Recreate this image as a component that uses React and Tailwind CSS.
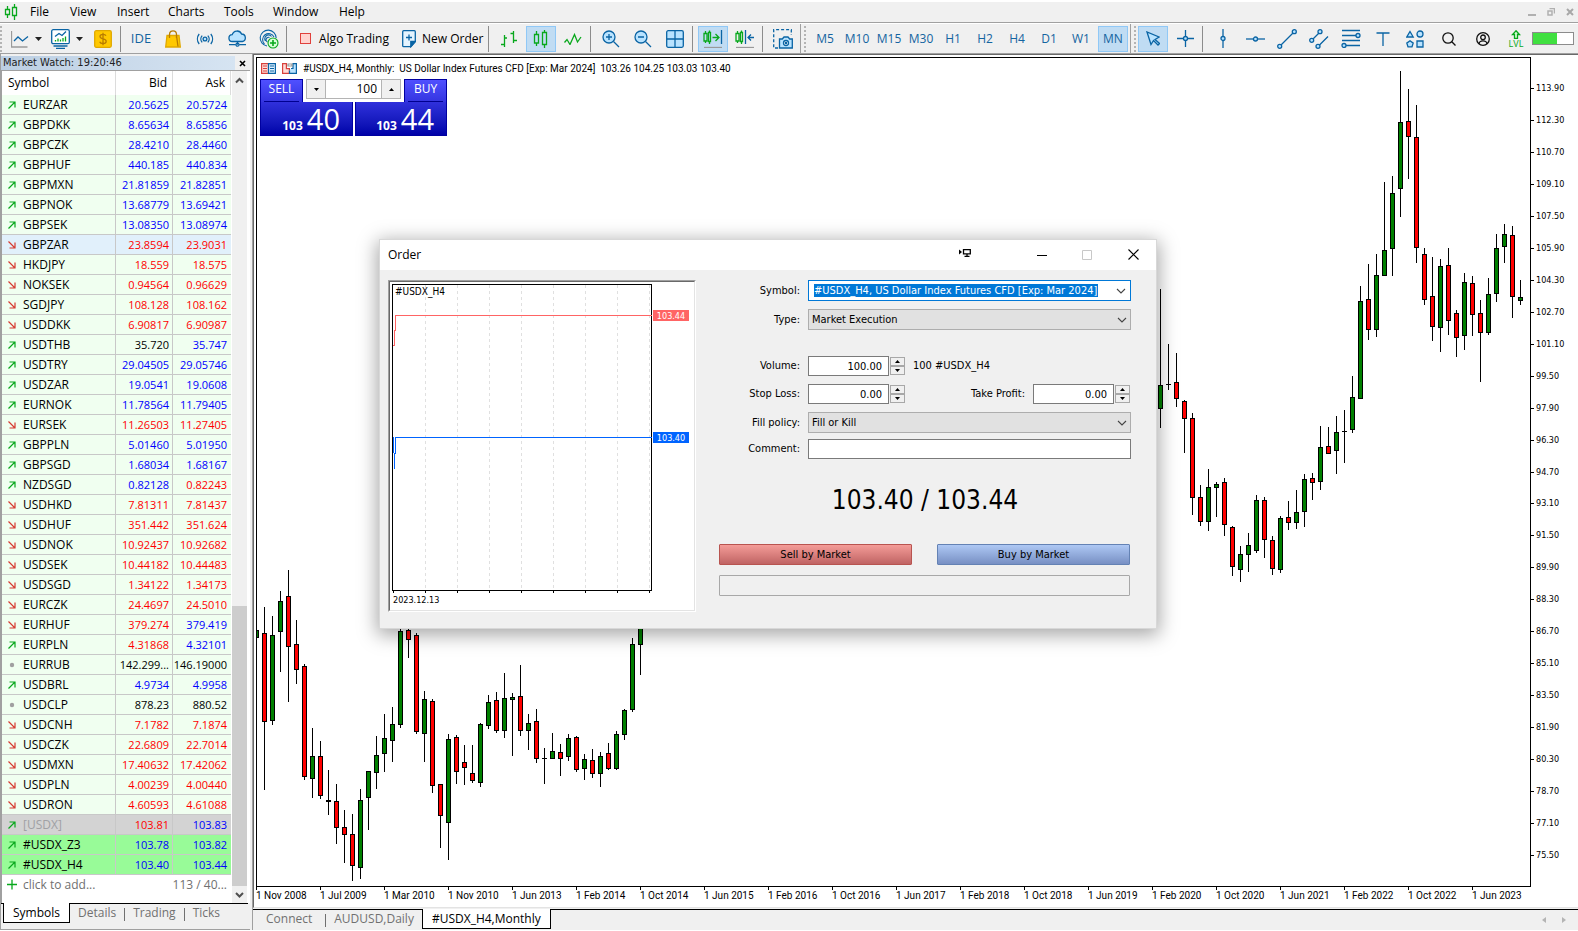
import React from "react";

const BLUE = "#0a64a4";
const SKY = "#b9e3ff";
const GREEN = "#08a81c";

const INK = { b: "text-[#0000ff]", r: "text-[#ff0000]", k: "text-black" };

const QUOTES = [
  ["u", "EURZAR", "20.5625", "20.5724", "bb"],
  ["u", "GBPDKK", "8.65634", "8.65856", "bb"],
  ["u", "GBPCZK", "28.4210", "28.4460", "bb"],
  ["u", "GBPHUF", "440.185", "440.834", "bb"],
  ["u", "GBPMXN", "21.81859", "21.82851", "bb"],
  ["u", "GBPNOK", "13.68779", "13.69421", "bb"],
  ["u", "GBPSEK", "13.08350", "13.08974", "bb"],
  ["d", "GBPZAR", "23.8594", "23.9031", "rr", "bg-[#e1f0fb]"],
  ["d", "HKDJPY", "18.559", "18.575", "rr"],
  ["d", "NOKSEK", "0.94564", "0.96629", "rr"],
  ["d", "SGDJPY", "108.128", "108.162", "rr"],
  ["d", "USDDKK", "6.90817", "6.90987", "rr"],
  ["u", "USDTHB", "35.720", "35.747", "kb"],
  ["u", "USDTRY", "29.04505", "29.05746", "bb"],
  ["u", "USDZAR", "19.0541", "19.0608", "bb"],
  ["u", "EURNOK", "11.78564", "11.79405", "bb"],
  ["d", "EURSEK", "11.26503", "11.27405", "rr"],
  ["u", "GBPPLN", "5.01460", "5.01950", "bb"],
  ["u", "GBPSGD", "1.68034", "1.68167", "bb"],
  ["u", "NZDSGD", "0.82128", "0.82243", "br"],
  ["d", "USDHKD", "7.81311", "7.81437", "rr"],
  ["d", "USDHUF", "351.442", "351.624", "rr"],
  ["d", "USDNOK", "10.92437", "10.92682", "rr"],
  ["d", "USDSEK", "10.44182", "10.44483", "rr"],
  ["d", "USDSGD", "1.34122", "1.34173", "rr"],
  ["d", "EURCZK", "24.4697", "24.5010", "rr"],
  ["d", "EURHUF", "379.274", "379.419", "rb"],
  ["u", "EURPLN", "4.31868", "4.32101", "rb"],
  ["n", "EURRUB", "142.299...", "146.19000", "kk"],
  ["u", "USDBRL", "4.9734", "4.9958", "bb"],
  ["n", "USDCLP", "878.23", "880.52", "kk"],
  ["d", "USDCNH", "7.1782", "7.1874", "rr"],
  ["d", "USDCZK", "22.6809", "22.7014", "rr"],
  ["d", "USDMXN", "17.40632", "17.42062", "rr"],
  ["d", "USDPLN", "4.00239", "4.00440", "rr"],
  ["d", "USDRON", "4.60593", "4.61088", "rr"],
  ["u", "[USDX]", "103.81", "103.83", "rb", "bg-[#d3d3d3]", "text-[#a0a0a4]"],
  ["u", "#USDX_Z3", "103.78", "103.82", "bb", "bg-[#98fb98]"],
  ["u", "#USDX_H4", "103.40", "103.44", "bb", "bg-[#98fb98]"],
];

// Each run: first slot, vertical origin, then [direction, high, body top, body bottom, low] at three units per pixel.
const RUNS = [
  [0, 560, [
    ["g", 210, 210, 234, 234], ["r", 141, 219, 486, 690], ["g", 168, 225, 483, 494], ["g", 93, 123, 216, 336],
    ["r", 30, 108, 261, 426], ["r", 180, 252, 330, 372], ["r", 312, 318, 651, 660], ["g", 504, 588, 657, 714],
    ["r", 543, 588, 708, 717], ["r", 630, 720, 726, 765], ["r", 672, 723, 804, 852], ["r", 750, 801, 825, 909],
    ["r", 762, 822, 918, 963], ["g", 687, 720, 924, 957], ["g", 633, 633, 714, 810], ["g", 528, 585, 639, 687],
    ["g", 462, 534, 582, 636], ["g", 441, 492, 543, 606], ["g", 204, 213, 495, 504], ["r", 204, 210, 240, 294],
    ["r", 219, 225, 516, 522], ["g", 393, 417, 522, 606], ["r", 417, 423, 678, 699], ["r", 672, 672, 768, 864],
    ["g", 522, 537, 789, 900], ["r", 525, 531, 636, 672], ["r", 555, 606, 624, 675], ["r", 555, 639, 663, 669],
    ["g", 489, 492, 669, 681], ["g", 405, 426, 498, 507], ["r", 396, 420, 513, 519], ["g", 339, 414, 513, 534],
    ["g", 399, 411, 420, 588], ["r", 315, 408, 513, 528], ["g", 462, 489, 513, 570], ["r", 447, 483, 597, 609],
    ["g", 564, 594, 597, 672], ["g", 519, 573, 597, 597], ["r", 552, 576, 597, 648], ["g", 522, 534, 591, 603],
    ["r", 528, 531, 630, 636], ["g", 582, 597, 627, 660], ["r", 567, 600, 642, 654], ["g", 576, 588, 642, 681],
    ["r", 549, 579, 627, 630], ["g", 513, 522, 627, 630], ["g", 447, 450, 525, 540], ["g", 234, 252, 450, 456],
    ["g", 100, 120, 255, 345],
  ]],
  [113, 280, [
    ["g", 27, 315, 387, 444], ["g", 192, 312, 315, 330], ["r", 219, 306, 357, 381], ["r", 360, 363, 417, 519],
    ["r", 399, 414, 654, 705], ["r", 615, 651, 726, 738], ["g", 567, 621, 726, 753], ["g", 606, 612, 624, 711],
    ["r", 594, 606, 735, 768], ["r", 738, 741, 861, 888], ["g", 798, 822, 870, 906], ["g", 759, 795, 825, 876],
    ["g", 645, 660, 813, 819], ["r", 651, 660, 780, 834], ["r", 768, 780, 867, 885], ["g", 708, 714, 870, 879],
    ["r", 663, 711, 729, 750], ["g", 630, 696, 729, 747], ["g", 582, 597, 696, 741], ["r", 579, 594, 609, 660],
    ["g", 438, 501, 606, 630], ["r", 441, 498, 522, 522], ["g", 408, 456, 513, 582], ["g", 390, 453, 456, 549],
    ["g", 288, 351, 450, 459],
  ]],
  [138, 50, [
    ["g", 708, 753, 1047, 1047], ["r", 642, 747, 840, 870], ["g", 612, 675, 840, 861], ["g", 396, 600, 678, 678],
    ["g", 378, 429, 597, 678], ["g", 63, 216, 417, 501], ["r", 117, 213, 261, 387], ["r", 165, 261, 594, 639],
    ["r", 594, 612, 750, 765], ["r", 621, 738, 831, 873], ["g", 627, 648, 834, 906], ["r", 594, 645, 813, 855],
    ["r", 780, 789, 864, 921], ["g", 669, 696, 858, 900], ["r", 678, 699, 795, 858], ["r", 750, 789, 849, 996],
    ["g", 684, 732, 849, 855], ["g", 552, 594, 732, 756], ["g", 522, 552, 591, 639], ["r", 528, 555, 741, 804],
    ["g", 690, 741, 753, 765],
  ]],
];

const CANDLES = RUNS.flatMap(([start, origin, list]) =>
  list.map(([dir, high, top, bottom, low], i) => ({
    dir,
    x: (start + i) * 8 - 1,
    high: Math.round(high / 3) + origin - 58,
    top: Math.round(top / 3) + origin - 58,
    bottom: Math.round(bottom / 3) + origin - 58,
    low: Math.round(low / 3) + origin - 58,
  }))
);

const DATES = [
  "1 Nov 2008", "1 Jul 2009", "1 Mar 2010", "1 Nov 2010", "1 Jun 2013", "1 Feb 2014", "1 Oct 2014",
  "1 Jun 2015", "1 Feb 2016", "1 Oct 2016", "1 Jun 2017", "1 Feb 2018", "1 Oct 2018", "1 Jun 2019",
  "1 Feb 2020", "1 Oct 2020", "1 Jun 2021", "1 Feb 2022", "1 Oct 2022", "1 Jun 2023",
];

const PRICES = Array.from({ length: 25 }, (_, i) => (113.9 - i * 1.6).toFixed(2));

function Icon({ w = 20, h = 20, children, ...rest }) {
  return (
    <svg width={w} height={h} viewBox={`0 0 ${w} ${h}`} fill="none" stroke={BLUE} strokeWidth="1.3" aria-hidden="true" className="shrink-0" {...rest}>
      {children}
    </svg>
  );
}

function Tool({ label, active, children }) {
  return (
    <button
      type="button"
      aria-label={label}
      className={`flex h-[26px] w-[30px] shrink-0 items-center justify-center border ${active ? "border-[#90c8f6] bg-[#c0dcf3]" : "border-transparent"}`}
    >
      {children}
    </button>
  );
}

const Sep = () => <span className="h-[26px] w-1 shrink-0 border-l border-[#8c8c8c]" />;
const Grip = () => <span className="h-[26px] w-[2px] shrink-0 border-l-2 border-dotted border-[#b4b4b4]" />;
const Caret = () => (
  <svg width="7" height="4" viewBox="0 0 7 4" aria-hidden="true"><path d="M0 0h7L3.500 4z" fill="#222" /></svg>
);

function MenuBar() {
  return (
    <header className="flex h-[23px] items-center border-t-2 border-b border-t-white border-b-[#a0a0a0] bg-[#f0f0f0] text-xs">
      <Icon w={14} h={16} stroke={GREEN} className="mr-[3px] ml-1 shrink-0">
        <path d="M3.500 2v3M3.500 11v3M1.500 5.500h4v5h-4zM10.500 0v3M10.500 12v4M8.500 3.500h4v8h-4z" />
      </Icon>
      <nav className="flex">
        <a href="#file" className="w-10 pl-[9px]">File</a>
        <a href="#view" className="w-[47px] pl-[9px]">View</a>
        <a href="#insert" className="w-[51px] pl-[9px]">Insert</a>
        <a href="#charts" className="w-14 pl-[9px]">Charts</a>
        <a href="#tools" className="w-[49px] pl-[9px]">Tools</a>
        <a href="#window" className="w-[66px] pl-[9px]">Window</a>
        <a href="#help" className="pl-[9px]">Help</a>
      </nav>
      <div className="mr-1 ml-auto flex gap-[11px]">
        <button type="button" aria-label="Minimize"><Icon w={8} h={8} stroke="#b0b0b0" strokeWidth="2"><path d="M0 7h8" /></Icon></button>
        <button type="button" aria-label="Restore"><Icon w={8} h={8} stroke="#b0b0b0"><path d="M2.500 0.600h5v5M1 3h4v4H1z" strokeWidth="1.500" /></Icon></button>
        <button type="button" aria-label="Close"><Icon w={8} h={8} stroke="#a8a8a8" strokeWidth="2"><path d="M1 1l6 6M7 1L1 7" /></Icon></button>
      </div>
    </header>
  );
}

function Toolbar() {
  return (
    <div className="flex h-[31px] items-center gap-[2px] overflow-hidden border-t border-b border-t-white border-b-[#a0a0a0] bg-[#f0f0f0] text-xs text-[#1464a0]">
      <span className="w-1 shrink-0"><span className="block h-[26px] border-l-2 border-dotted border-[#b4b4b4]" /></span>
      <button type="button" aria-label="Line chart" className="flex w-10 shrink-0 items-center gap-[6px] pl-[5px]">
        <Icon w={18} h={18}><path d="M.5 1v16h16" stroke="#9a9a9a" /><path d="M3 11l4-4 4.500 4L17 6.500" /></Icon>
        <Caret />
      </button>
      <button type="button" aria-label="Indicators" className="flex w-[38px] shrink-0 items-center gap-[6px] pl-[3px]">
        <Icon w={19} h={20}>
          <rect x=".7" y=".7" width="17.600" height="14" rx="1.500" fill="#fff" />
          <path d="M4 7.500l4-3 3 2 4-4" />
          <path d="M4.500 12.500v-1.500M7 12.500v-3M9.500 12.500v-2M12 12.500v-3.500M14.500 12.500v-5" stroke={GREEN} />
          <path d="M2.500 17h14M5 19.300h9" />
        </Icon>
        <Caret />
      </button>
      <Tool label="Trade">
        <Icon w={18} h={18} stroke="#e0a800"><rect x=".7" y=".7" width="16.600" height="16.600" rx="1.500" fill="#ffc800" />
          <path d="M12 5.800C11.500 4.800 10.500 4.400 9 4.400c-1.700 0-3 .8-3 2.200 0 3.200 6.200 1.400 6.200 4.600 0 1.500-1.400 2.400-3.200 2.400-1.700 0-2.900-.6-3.300-1.800M9 2.700v12.600" stroke="#b87c00" /></Icon>
      </Tool>
      <Sep />
      <Tool label="IDE"><span className="text-[13px]">IDE</span></Tool>
      <Tool label="Market">
        <Icon w={16} h={18} stroke="#e0a800"><path d="M2 5.500h12L15.300 17H.7z" fill="#ffc800" /><path d="M4.500 8V4.500C4.500 1 7 .8 8 .8s3.500.2 3.500 3.700V8M11.500 5.500L13 16.500" stroke="#b87c00" /></Icon>
      </Tool>
      <Tool label="Signals">
        <Icon w={18} h={14}><circle cx="9" cy="7" r="1.900" fill={SKY} /><path d="M6.200 3.600a5 5 0 000 6.800M11.800 3.600a5 5 0 010 6.800M3.200 2a8 8 0 000 10M14.800 2a8 8 0 010 10" /></Icon>
      </Tool>
      <Tool label="VPS">
        <Icon w={19} h={17}><path d="M4.500 11.500a3.400 3.400 0 01-.3-6.800A5 5 0 0113.600 4a3.800 3.800 0 01.8 7.500z" fill={SKY} /><path d="M9.500 11.500v3.200M1 14.700h6.800M11.200 14.700H18" /><circle cx="9.500" cy="14.700" r="1.500" /></Icon>
      </Tool>
      <Tool label="Community">
        <Icon w={20} h={20} strokeWidth="1.100"><path d="M8 17A8 8 0 1117.200 9M5.500 15A6 6 0 1115 8M6.500 12A3.700 3.700 0 1112.500 7.500M8.500 13A1.600 1.600 0 1110.500 8.500" /><circle cx="14" cy="14" r="5" fill="#d9ffd9" stroke={GREEN} /><path d="M14 11v6M11 14h6" stroke={GREEN} strokeWidth="1.600" /></Icon>
      </Tool>
      <Sep />
      <button type="button" className="flex w-[100px] shrink-0 items-center gap-2 pl-2 text-black">
        <span className="size-[11px] border border-[#e0403c] bg-[#ffd4d0]" />
        Algo Trading
      </button>
      <button type="button" className="flex w-[92px] shrink-0 items-center gap-[6px] pl-2 whitespace-nowrap text-black">
        <Icon w={14} h={18}><path d="M1.700.7h10.600q1 0 1 1v9.800l-4.500 5.200H1.700q-1 0-1-1v-14q0-1 1-1z" fill="#e4f4ff" /><path d="M13.300 11.500H8.800v5.200z" fill={BLUE} /><path d="M7 4.500v6M4 7.500h6" /></Icon>
        New Order
      </button>
      <Sep />
      <Tool label="Bar chart"><Icon w={18} h={18} stroke={GREEN}><path d="M4.500 5v12M1 14.500h3.500M4.500 8H7M13.500 1v12M10.500 3.500h3M13.500 10.500H17" /></Icon></Tool>
      <Tool label="Candles" active><Icon w={16} h={18} stroke={GREEN}><path d="M3.500 1v3M3.500 13v3M1.500 4.500h4v8.500h-4zM11.500 0v2.500M11.500 15v3M9.500 2.500h4v12h-4z" /></Icon></Tool>
      <Tool label="Line"><Icon w={18} h={12} stroke={GREEN}><path d="M.5 9.500l2.500-3 3 5 4.500-10 3 7.500 3.500-5" /></Icon></Tool>
      <Sep />
      <Tool label="Zoom in"><Icon w={18} h={18}><circle cx="7" cy="7" r="6" fill={SKY} /><path d="M11.500 11.500l5.500 5.500M7 4v6M4 7h6" /></Icon></Tool>
      <Tool label="Zoom out"><Icon w={18} h={18}><circle cx="7" cy="7" r="6" fill={SKY} /><path d="M11.500 11.500l5.500 5.500M4 7h6" /></Icon></Tool>
      <Tool label="Tile"><Icon w={18} h={18}><rect x=".7" y=".7" width="16.600" height="16.600" rx="1.500" fill={SKY} /><path d="M9 1v16M1 9h16" /></Icon></Tool>
      <Sep />
      <Tool label="Auto scroll" active><Icon w={20} h={18}><path d="M2.500 1v2M2.500 11v2M1 3.500h3V11H1zM6.500.5v2M6.500 12v2M5.500 2.500h2v9h-2zM9.500 7.500h6M12.500 4l3.500 3.500-3.500 3.500" stroke={GREEN} /><path d="M18.500 0v14" /><path d="M1 17.500h18" stroke="#999" /></Icon></Tool>
      <Tool label="Chart shift"><Icon w={20} h={18}><path d="M2.500 1v2M2.500 11v2M1 3.500h3V11H1zM6.500.5v2M6.500 12v2M5.500 2.500h2v9h-2z" stroke={GREEN} /><path d="M10.500 0v14M13 7.500h6M16 4.500l-3 3 3 3" /><path d="M1 17.500h18" stroke="#999" /></Icon></Tool>
      <Sep />
      <Tool label="Screenshot"><Icon w={20} h={20}><path d="M5 19H.7V.7h17.600V6" strokeDasharray="3 2" /><path d="M6.500 19V10h2.800l1.700-2h4l1.700 2h2.600v9z" fill={SKY} /><circle cx="13" cy="14" r="2.500" fill="#fff" /><circle cx="13" cy="14" r=".6" /></Icon></Tool>
      <span className="flex h-[30px] w-2 shrink-0 items-center border-l border-[#a0a0a0] pl-[3px]"><Grip /></span>
      {["M5", "M10", "M15", "M30", "H1", "H2", "H4", "D1", "W1", "MN"].map((t) => (
        <Tool key={t} label={t} active={t === "MN"}>{t}</Tool>
      ))}
      <span className="flex h-[30px] w-[6px] shrink-0 items-center border-l border-[#a0a0a0] pl-[3px]"><Grip /></span>
      <Tool label="Cursor" active><Icon w={14} h={15}><path d="M1 1l4 12.500 2.500-4 4.500 4.500 1.500-1.500L9 8.500l4-2.500z" fill={SKY} /></Icon></Tool>
      <Tool label="Crosshair"><Icon w={17} h={17}><path d="M8.500 0v6.500M8.500 10.500V17M0 8.500h6.500M10.500 8.500H17" /><circle cx="8.500" cy="8.500" r="2" fill={SKY} /></Icon></Tool>
      <Sep />
      <Tool label="Vertical line"><Icon w={6} h={19}><path d="M3 0v19" /><circle cx="3" cy="9.500" r="2" fill={SKY} /></Icon></Tool>
      <Tool label="Horizontal line"><Icon w={19} h={6}><path d="M0 3h19" /><circle cx="9.500" cy="3" r="2" fill={SKY} /></Icon></Tool>
      <Tool label="Trend line"><Icon w={20} h={20}><path d="M3 17L17 3" /><circle cx="2.700" cy="17.300" r="2" fill={SKY} /><circle cx="17.300" cy="2.700" r="2" fill={SKY} /></Icon></Tool>
      <Tool label="Channel"><Icon w={20} h={20}><path d="M2.500 11.500L11 3M9 17.500L19 7.500" /><circle cx="2.700" cy="11.300" r="2" fill={SKY} /><circle cx="11" cy="2.700" r="2" fill={SKY} /><circle cx="9" cy="17.300" r="2" fill={SKY} /></Icon></Tool>
      <Tool label="Fibonacci"><Icon w={20} h={19}><path d="M1 1.500h18M1 6.500h14M1 11.500h18M4 16.500h15" /><circle cx="17" cy="6.500" r="2" fill={SKY} /><circle cx="3" cy="16.500" r="2" fill={SKY} /></Icon></Tool>
      <Tool label="Text"><Icon w={14} h={14}><path d="M.5 1h13M7 1v13" /></Icon></Tool>
      <Tool label="Shapes"><Icon w={18} h={18}><path d="M4 1.500L7.200 7H.8zM4 10.800l3.200 2.300-1.200 3.700H2L.8 13.100zM11 11h6v6h-6z" fill={SKY} /><circle cx="14" cy="4" r="3" fill={SKY} /></Icon></Tool>
      <div className="mr-1 ml-auto flex shrink-0 items-center">
        <button type="button" aria-label="Search" className="mr-5"><Icon w={14} h={14} stroke="#111"><circle cx="6" cy="6" r="5.200" /><path d="M9.800 9.800l3.700 3.700" /></Icon></button>
        <button type="button" aria-label="Account" className="mr-[18px]"><Icon w={14} h={14} stroke="#111"><circle cx="7" cy="7" r="6.300" /><circle cx="7" cy="5.300" r="2.300" /><path d="M3 11.800c.5-4 7.500-4 8 0" /></Icon></button>
        <button type="button" aria-label="Level" className="mr-2 flex w-4 flex-col items-center text-[9px] leading-[9px] text-[#08a81c]">
          <Icon w={10} h={9} stroke={GREEN}><path d="M5 .8l3.500 3.700H6.500v4h-3v-4H1.500z" fill="#d9ffd9" /></Icon>
          LVL
        </button>
        <span className="flex h-[13px] w-[42px] border border-[#8c8c8c] bg-white"><span className="w-6 bg-[#40e040]" /></span>
      </div>
    </div>
  );
}

function Trend({ dir }) {
  if (dir === "n") return <svg width="8" height="8" viewBox="0 0 8 8" aria-hidden="true"><circle cx="4" cy="4" r="2.200" fill="#a0a0a0" /></svg>;
  return dir === "u" ? (
    <svg width="8" height="8" viewBox="0 0 8 8" fill="none" stroke={GREEN} strokeWidth="1.200" aria-hidden="true"><path d="M1.500 1H7v5.500M7 1L.5 7.500" /></svg>
  ) : (
    <svg width="8" height="8" viewBox="0 0 8 8" fill="none" stroke="#d63a30" strokeWidth="1.200" aria-hidden="true"><path d="M1.500 7H7V1.500M7 7L.5.5" /></svg>
  );
}

function MarketWatch() {
  const num = "h-5 border-b border-[#c8c8c8] p-0 text-right text-[11px] leading-[19px]";
  return (
    <section className="flex w-[250px] shrink-0 flex-col border-l border-[#a0a0a0]">
      <h2 className="mt-[2px] flex h-[14px] items-center text-xs leading-[14px]">
        <span className="h-[14px] w-[234px] bg-gradient-to-r from-[#bccfe3] to-[#d6e4f2] pl-[2px] font-['DejaVu_Sans_Condensed','Noto_Sans',sans-serif] text-[11px] text-[#222]">Market Watch: 19:20:46</span>
        <button type="button" aria-label="Close panel" className="ml-1"><Icon w={7} h={7} stroke="#000" strokeWidth="1.600"><path d="M1 1l5 5M6 1L1 6" /></Icon></button>
      </h2>
      <div className="flex border-t border-l border-[#a0a0a0] bg-white">
        <div className="w-[229px]">
          <table className="w-full table-fixed border-separate border-spacing-0 text-xs">
            <colgroup><col className="w-[114px]" /><col className="w-[57px]" /><col className="w-[58px]" /></colgroup>
            <thead>
              <tr className="h-6">
                <th className="border-r border-[#dcdcdc] p-0 pl-[6px] text-left font-normal">Symbol</th>
                <th className="border-r border-[#dcdcdc] p-0 pr-[5px] text-right font-normal">Bid</th>
                <th className="border-r border-[#dcdcdc] p-0 pr-[5px] text-right font-normal">Ask</th>
              </tr>
            </thead>
            <tbody>
              {QUOTES.map(([dir, name, bid, ask, inks, bg, ink]) => (
                <tr key={name} className={bg || "bg-[#f0fff0]"}>
                  <td className="h-5 border-r border-b border-[#c8c8c8] p-0">
                    <span className={`flex items-center gap-[7px] pl-[6px] leading-[19px] ${ink || "text-black"}`}><Trend dir={dir} />{name}</span>
                  </td>
                  <td className={`border-r pr-[3px] ${num} ${INK[inks[0]]}`}>{bid}</td>
                  <td className={`pr-1 ${num} ${INK[inks[1]]}`}>{ask}</td>
                </tr>
              ))}
            </tbody>
          </table>
          <div className="flex h-7 justify-between pr-1 pl-[5px] text-xs leading-5 text-[#707070]">
            <span className="flex gap-[6px]">
              <Icon w={10} h={20} stroke={GREEN}><path d="M0 9.500h10M5 4.500v10" /></Icon>
              click to add...
            </span>
            <span>113 / 40...</span>
          </div>
        </div>
        <div className="ml-px flex w-[15px] flex-col items-center bg-[#f0f0f0]">
          <Icon w={9} h={18} stroke="#505050" strokeWidth="2"><path d="M1 11.500l3.500-3.500L8 11.500" /></Icon>
          <span className="mt-auto h-[280px] w-full bg-[#cdcdcd]" />
          <Icon w={9} h={17} stroke="#505050" strokeWidth="2"><path d="M1 7l3.500 3.500L8 7" /></Icon>
        </div>
      </div>
      <div className="flex flex-1 border-b border-[#a0a0a0] pb-1">
        <div className="mr-[2px] flex flex-1 items-start border-t border-black text-xs leading-[18px] text-[#707070]">
          <button type="button" className="-mt-px ml-[2px] h-5 border border-t-0 border-black bg-white px-[9px] text-black">Symbols</button>
          <button type="button" className="px-2">Details</button>
          <span className="mt-1 h-[13px] border-l border-[#707070]" />
          <button type="button" className="px-2">Trading</button>
          <span className="mt-1 h-[13px] border-l border-[#707070]" />
          <button type="button" className="px-2">Ticks</button>
        </div>
      </div>
    </section>
  );
}

function Plot() {
  return (
    <svg width="1273" height="828" viewBox="0 0 1273 828" shapeRendering="crispEdges" className="absolute top-0 left-0" role="img" aria-label="Monthly candles">
      {CANDLES.map(({ dir, x, high, top, bottom, low }) => (
        <g key={x}>
          <rect x={x} y={high} width="1" height={low - high} />
          <rect x={x - 2} y={top} width="5" height={bottom - top} />
          {bottom - top > 2 && <rect x={x - 1} y={top + 1} width="3" height={bottom - top - 2} fill={dir === "g" ? "#008000" : "#ff0000"} />}
        </g>
      ))}
    </svg>
  );
}

function OneClick() {
  const top = "h-[23px] w-[43px] border border-b-0 border-[#0000a0] bg-gradient-to-b from-[#5050ff] to-[#3434e0] px-[3px] text-xs text-white";
  const low = "flex h-[34px] items-end border border-[#0000a0] border-t-0 bg-gradient-to-b from-[#3030dc] to-[#0000a8] text-white";
  return (
    <div className="absolute top-[21px] left-[3px] w-[187px]">
      <div className="flex justify-between">
        <button type="button" className={top}><span className="block border-b border-[#000090] pb-[3px] leading-[18px]">SELL</span></button>
        <div className="mx-[3px] flex h-5 flex-1 border border-[#b4b4b4] bg-white">
          <button type="button" aria-label="Less volume" className="flex w-[19px] items-center justify-center border-r border-[#b4b4b4] bg-[#f0f0f0]"><svg width="5" height="3" viewBox="0 0 5 3" aria-hidden="true"><path d="M0 0h5L2.500 3z" /></svg></button>
          <input aria-label="Lots" defaultValue="100" className="w-0 min-w-0 flex-1 pr-1 text-right text-xs" />
          <button type="button" aria-label="More volume" className="flex w-[19px] items-center justify-center border-l border-[#b4b4b4] bg-[#f0f0f0]"><svg width="5" height="3" viewBox="0 0 5 3" aria-hidden="true"><path d="M0 3h5L2.500 0z" /></svg></button>
        </div>
        <button type="button" className={top}><span className="block border-b border-[#000090] pb-[3px] leading-[18px]">BUY</span></button>
      </div>
      <div className="flex justify-between">
        <button type="button" aria-label="Sell 103.40" className={`${low} w-[93px] justify-end pr-3`}>
          <b className="mr-1 pb-px text-xs">103</b><span className="pb-[2px] text-[29px] leading-[29px]">40</span>
        </button>
        <button type="button" aria-label="Buy 103.44" className={`${low} w-[92px] justify-end pr-3`}>
          <b className="mr-1 pb-px text-xs">103</b><span className="pb-[2px] text-[29px] leading-[29px]">44</span>
        </button>
      </div>
    </div>
  );
}

function ChartPane() {
  return (
    <section className="ml-[2px] flex min-w-0 flex-1 flex-col border-l border-[#a0a0a0]">
      <div className="flex flex-1 flex-col border-t border-b border-l border-t-[#696969] border-b-[#e3e3e3] border-l-[#696969] bg-white pt-[2px] pl-[2px]">
        <div className="flex flex-1">
          <div className="relative h-[830px] min-w-0 flex-1 overflow-hidden border border-black">
            <Plot />
            <div className="relative flex items-center pt-1 pl-1 font-[Roboto,'Noto_Sans',sans-serif] text-[10px] leading-[13px] whitespace-pre">
              <Icon w={15} h={11} strokeWidth="1.200" className="mr-[6px] shrink-0"><path d="M.6.6H7.500v9.800H.6zM2 3h4M2 5.500h4M2 8h4" stroke="#d8403c" fill="#ffdcd8" /><path d="M7.500.6h6.900v9.800H7.500zM9 3h4M9 5.500h4M9 8h4" fill="#dcf0ff" /></Icon>
              <Icon w={15} h={11} strokeWidth="1.200" className="mr-[6px] shrink-0"><path d="M.6.6h3.800v5h3v4.800H.6z" stroke="#d8403c" fill="#ffdcd8" /><path d="M9 5.500h2V.6h3.400v9.800H7.500V7.500" fill="#b9e3ff" /><path d="M6 1h4v2H6z" stroke="#999" /></Icon>
              <span>#USDX_H4, Monthly:  US Dollar Index Futures CFD [Exp: Mar 2024]  103.26 104.25 103.03 103.40</span>
            </div>
            <OneClick />
          </div>
          <ul className="w-[47px] shrink-0 pt-[24px] font-['DejaVu_Sans_Condensed','Noto_Sans',sans-serif] text-[9px] leading-[14px]">
            {PRICES.map((p, i) => (
              <li key={p} className={`flex items-center gap-[2px] ${i === 12 ? "h-[31px] pb-[17px]" : "h-8 pb-[18px]"}`}>
                <span className="w-[3px] border-t border-black" />{p}
              </li>
            ))}
          </ul>
        </div>
        <ul className="flex h-5 overflow-hidden font-[Roboto,'Noto_Sans',sans-serif] text-[10px] leading-[12px] whitespace-nowrap">
          {DATES.map((d) => (
            <li key={d} className="w-16 shrink-0"><span className="block h-[3px] w-px bg-black" />{d}</li>
          ))}
        </ul>
      </div>
      <div className="mt-px flex h-[21px] items-start border-t border-black text-xs leading-[18px] text-[#707070]">
        <button type="button" className="px-[13px]">Connect</button>
        <span className="mt-1 h-[13px] border-l border-[#707070]" />
        <button type="button" className="px-2">AUDUSD,Daily</button>
        <button type="button" className="-mt-px h-5 border border-t-0 border-black bg-white px-[9px] text-black">#USDX_H4,Monthly</button>
        <span className="mt-[7px] mr-3 ml-auto flex gap-4">
          <svg width="4" height="6" viewBox="0 0 4 6" aria-hidden="true"><path d="M4 0v6L0 3z" fill="#b4b4b4" /></svg>
          <svg width="4" height="6" viewBox="0 0 4 6" aria-hidden="true"><path d="M0 0v6l4-3z" fill="#b4b4b4" /></svg>
        </span>
      </div>
    </section>
  );
}

const Chevron = () => (
  <svg width="10" height="6" viewBox="0 0 10 6" fill="none" stroke="#444" strokeWidth="1.100" aria-hidden="true" className="pointer-events-none"><path d="M1 1l4 4 4-4" /></svg>
);

function Spin({ id, value }) {
  const btn = "flex h-[9px] w-[15px] items-center justify-center border border-[#a8a8a8] bg-[#f0f0f0]";
  return (
    <span className="flex items-center gap-px">
      <input id={id} defaultValue={value} className="h-5 w-[81px] border border-[#7a7a7a] bg-white pr-[6px] text-right" />
      <span className="flex flex-col">
        <button type="button" aria-label={`Increase ${id}`} className={btn}><svg width="5" height="3" viewBox="0 0 5 3" aria-hidden="true"><path d="M0 3h5L2.500 0z" /></svg></button>
        <button type="button" aria-label={`Decrease ${id}`} className={btn}><svg width="5" height="3" viewBox="0 0 5 3" aria-hidden="true"><path d="M0 0h5L2.500 3z" /></svg></button>
      </span>
    </span>
  );
}

function Drop({ id, value }) {
  return (
    <span className="relative flex flex-1 items-center">
      <select id={id} className="h-[21px] w-full appearance-none border border-[#adadad] bg-[#e1e1e1] pl-[3px]"><option>{value}</option></select>
      <span className="pointer-events-none absolute right-1"><Chevron /></span>
    </span>
  );
}

function TickChart() {
  return (
    <div className="h-[332px] w-[308px] shrink-0 border border-t-[#a0a0a0] border-r-white border-b-white border-l-[#a0a0a0]">
      <div className="h-full border border-t-[#696969] border-r-[#e3e3e3] border-b-[#e3e3e3] border-l-[#696969] bg-white">
        <svg width="304" height="328" viewBox="390 282 304 328" shapeRendering="crispEdges" role="img" aria-label="Tick chart" className="block">
          {[0, 1, 2, 3, 4, 5, 6, 7].map((i) => (
            <path key={i} d={`M${425.5 + i * 32} 285v305`} stroke="#e0e0e0" strokeDasharray="3 3" />
          ))}
          <rect x="392.500" y="284.500" width="259" height="306" fill="none" stroke="#000" />
          {[0, 1, 2, 3, 4, 5, 6, 7, 8].map((i) => <rect key={i} x={393 + i * 32} y="591" width="1" height="2" />)}
          <path d="M393 345.500h1.500V330.500h1V315.500H652" fill="none" stroke="#ff6464" />
          <path d="M393.500 453v-16M394.500 469V453.500h1V437.500H652" fill="none" stroke="#0064ff" />
          <rect x="653" y="310" width="36" height="11" fill="#ff6464" />
          <rect x="653" y="432" width="36" height="11" fill="#0064ff" />
          <g fontSize="10">
            <text x="395" y="295">#USDX_H4</text>
            <text x="393" y="603" fontSize="9">2023.12.13</text>
            <text x="671" y="319" fontSize="9" textAnchor="middle" fill="#fff">103.44</text>
            <text x="671" y="441" fontSize="9" textAnchor="middle" fill="#fff">103.40</text>
          </g>
        </svg>
      </div>
    </div>
  );
}

function OrderDialog() {
  const row = "flex items-center gap-2";
  const label = "w-[81px] text-right";
  return (
    <div role="dialog" aria-label="Order" className="absolute top-[239px] left-[379px] w-[778px] border border-[#d8d8d8] bg-[#f0f0f0] font-['DejaVu_Sans_Condensed','Noto_Sans',sans-serif] text-[11px] leading-4 text-black shadow-[0_4px_18px_2px_rgba(0,0,0,0.35)]">
      <div className="flex h-[30px] items-center bg-white pr-[17px] pb-px pl-2 font-['Open_Sans','Noto_Sans',sans-serif] text-xs">
        <span className="flex-1">Order</span>
        <button type="button" aria-label="Pin" className="mr-[66px] mb-1"><Icon w={12} h={8} stroke="#000"><path d="M4.500.6h6.800v4.300H4.500zM8 5v2.500M5.500 7.400h5" /><path d="M0 .5v5l3-2.500z" fill="#000" stroke="none" /></Icon></button>
        <button type="button" aria-label="Minimize dialog" className="mr-[35px]"><Icon w={10} h={10} stroke="#000" strokeWidth="1"><path d="M0 5.500h10" /></Icon></button>
        <button type="button" aria-label="Maximize dialog" className="mr-9"><Icon w={10} h={10} stroke="#c8c8c8" strokeWidth="1"><path d="M.5.5h9v9h-9z" /></Icon></button>
        <button type="button" aria-label="Close dialog"><Icon w={11} h={11} stroke="#000" strokeWidth="1.100"><path d="M.5.5l10 10M10.500.5l-10 10" /></Icon></button>
      </div>
      <div className="flex justify-between pt-[10px] pr-[25px] pb-4 pl-2">
        <TickChart />
        <form className="w-[412px]">
          <div className={row}>
            <label htmlFor="symbol" className={label}>Symbol:</label>
            <span className="flex h-[21px] flex-1 items-center justify-between border border-[#0078d7] bg-white pr-1 pl-[5px]">
              <select id="symbol" className="h-[13px] appearance-none bg-[#0078d7] leading-[13px] text-white"><option>#USDX_H4, US Dollar Index Futures CFD [Exp: Mar 2024]</option></select>
              <Chevron />
            </span>
          </div>
          <div className={`${row} mt-2`}>
            <label htmlFor="type" className={label}>Type:</label>
            <Drop id="type" value="Market Execution" />
          </div>
          <div className={`${row} mt-[26px]`}>
            <label htmlFor="volume" className={label}>Volume:</label>
            <Spin id="volume" value="100.00" />
            <span>100 #USDX_H4</span>
          </div>
          <div className={`${row} mt-2 pr-px`}>
            <label htmlFor="stop-loss" className={label}>Stop Loss:</label>
            <Spin id="stop-loss" value="0.00" />
            <label htmlFor="take-profit" className="ml-auto">Take Profit:</label>
            <Spin id="take-profit" value="0.00" />
          </div>
          <div className={`${row} mt-2`}>
            <label htmlFor="fill" className={label}>Fill policy:</label>
            <Drop id="fill" value="Fill or Kill" />
          </div>
          <div className={`${row} mt-[6px]`}>
            <label htmlFor="comment" className={label}>Comment:</label>
            <input id="comment" className="h-5 min-w-0 flex-1 border border-[#7a7a7a] bg-white px-1" />
          </div>
          <p className="mt-[25px] text-center text-[26px] leading-8">103.40 / 103.44</p>
          <div className="mt-7 flex justify-between pr-px">
            <button type="button" className="h-[21px] w-[193px] rounded-[1px] border border-[#b85450] bg-gradient-to-b from-[#f49c98] to-[#c06464]">Sell by Market</button>
            <button type="button" className="h-[21px] w-[193px] rounded-[1px] border border-[#6482b4] bg-gradient-to-b from-[#aec8f4] to-[#7890c4]">Buy by Market</button>
          </div>
          <div className="mt-[10px] mr-px h-[21px] rounded-[1px] border border-[#a8a8a8]" />
        </form>
      </div>
    </div>
  );
}

export default function App() {
  return (
    <div className="relative flex min-h-screen flex-col bg-[#f0f0f0] font-['Open_Sans','Noto_Sans',sans-serif] text-black">
      <MenuBar />
      <Toolbar />
      <main className="flex flex-1 border-b-2 border-white">
        <MarketWatch />
        <ChartPane />
      </main>
      <OrderDialog />
    </div>
  );
}
